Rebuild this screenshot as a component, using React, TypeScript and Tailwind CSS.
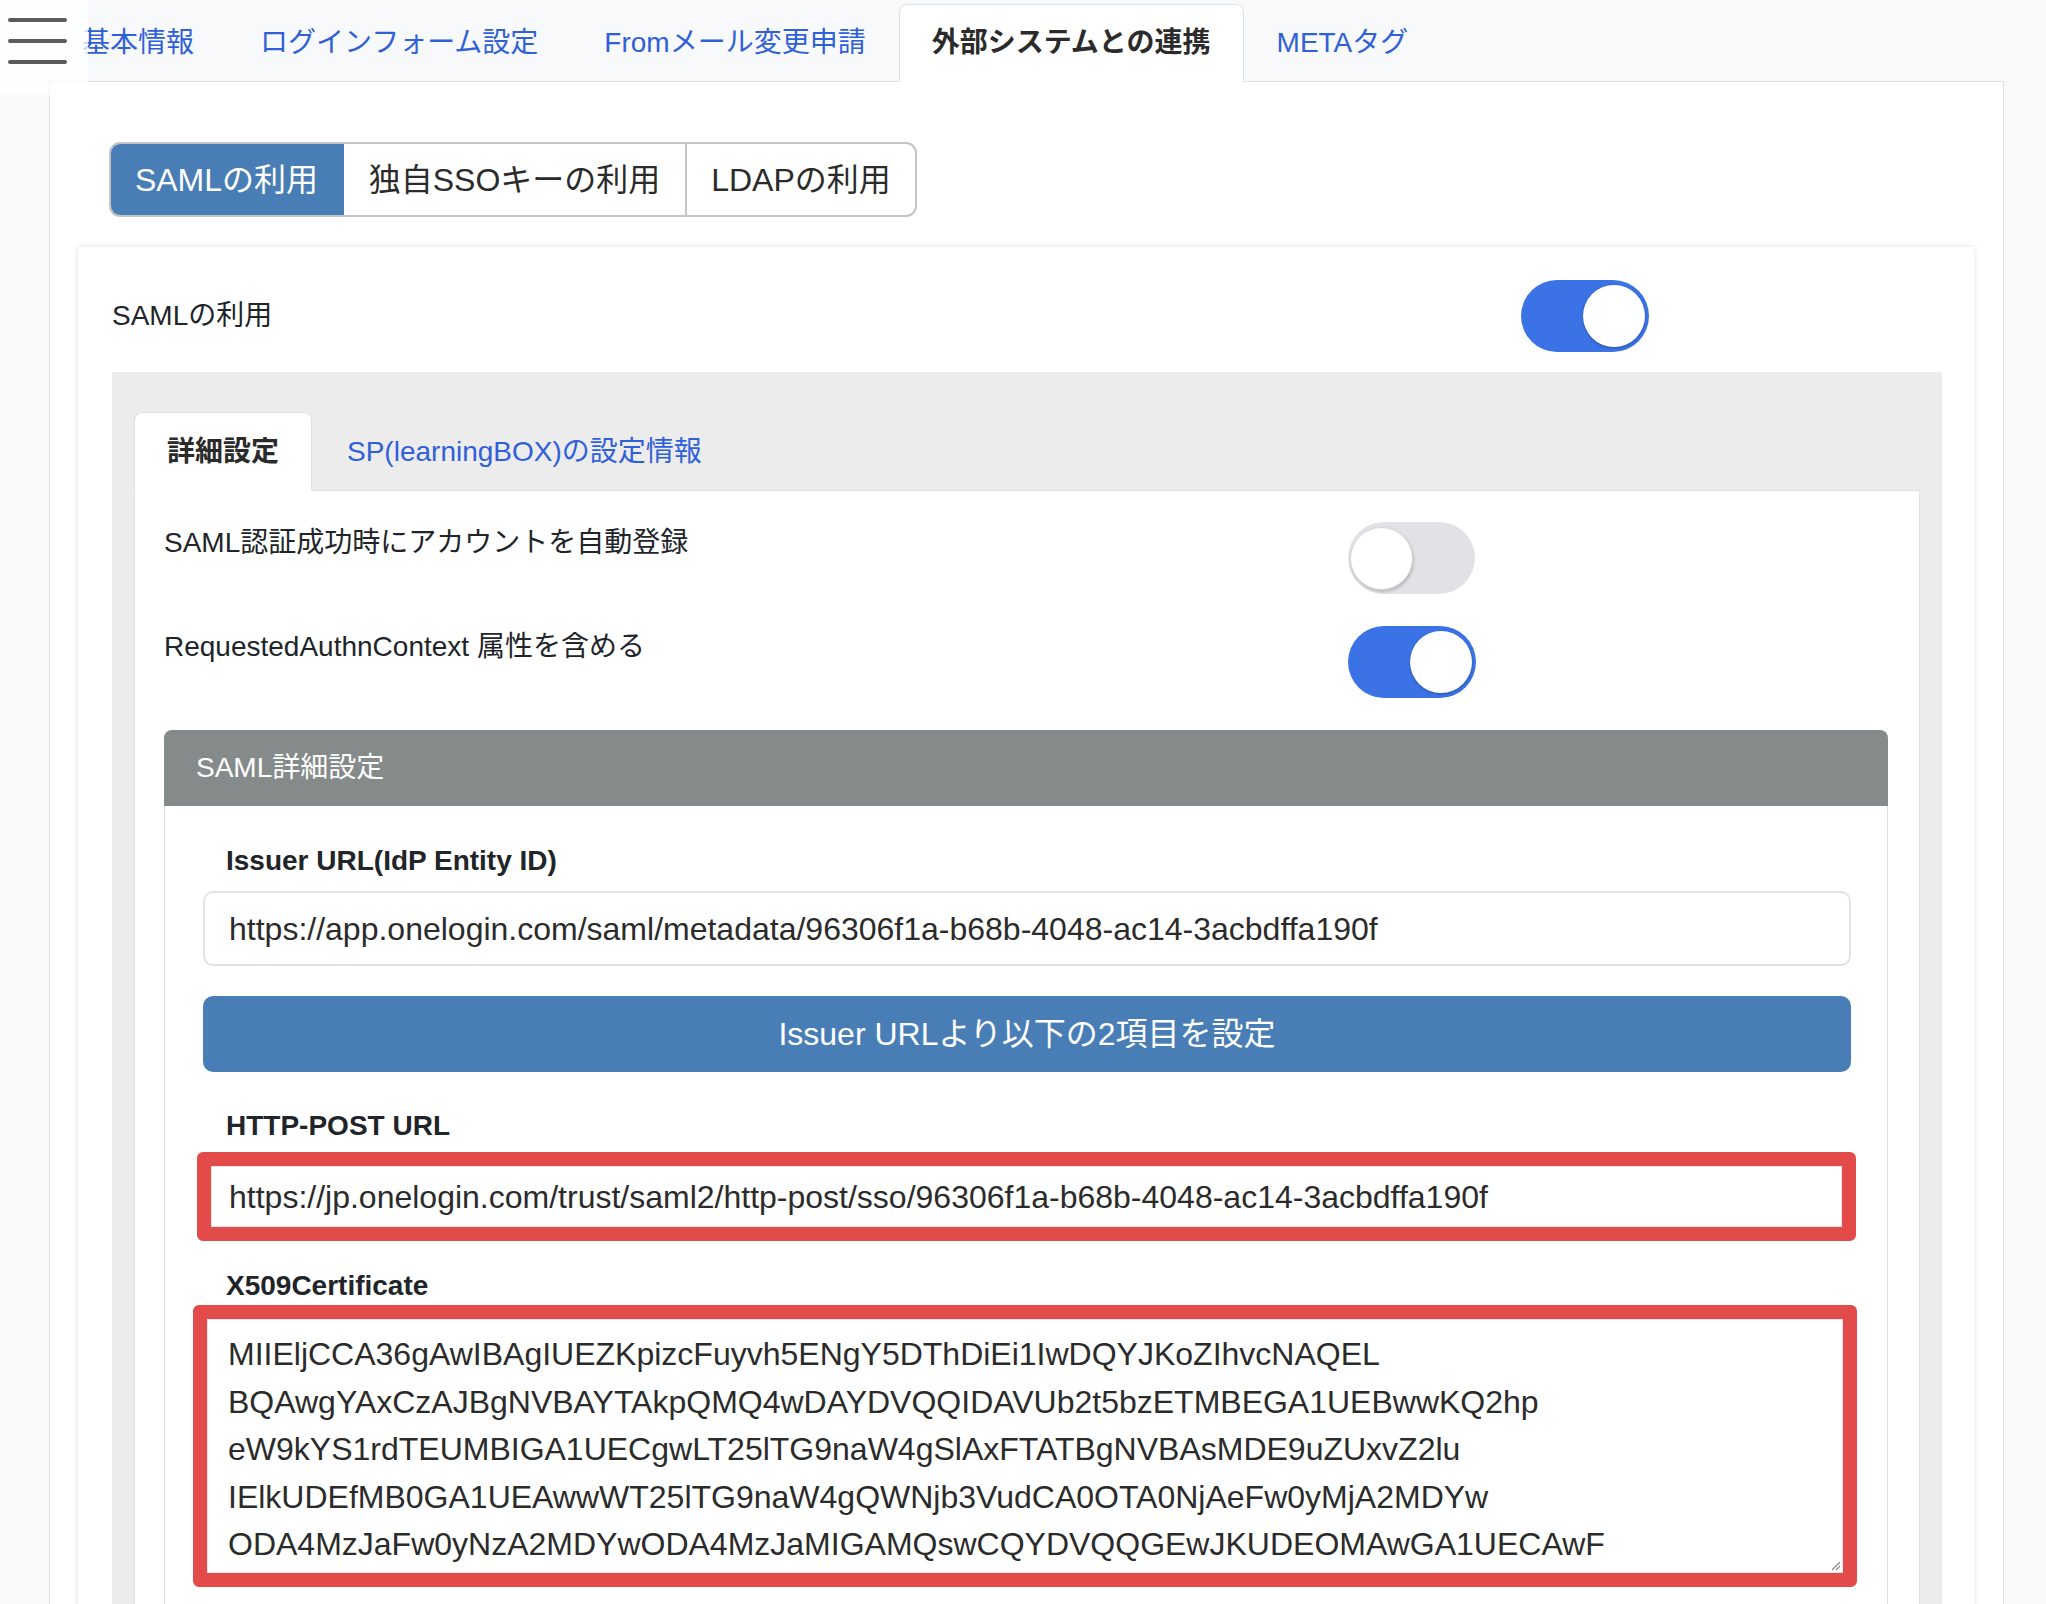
import React from 'react'

const mainTabs = ['基本情報', 'ログインフォーム設定', 'Fromメール変更申請', '外部システムとの連携', 'METAタグ']

const certLines = [
  'MIIEljCCA36gAwIBAgIUEZKpizcFuyvh5ENgY5DThDiEi1IwDQYJKoZIhvcNAQEL',
  'BQAwgYAxCzAJBgNVBAYTAkpQMQ4wDAYDVQQIDAVUb2t5bzETMBEGA1UEBwwKQ2hp',
  'eW9kYS1rdTEUMBIGA1UECgwLT25lTG9naW4gSlAxFTATBgNVBAsMDE9uZUxvZ2lu',
  'IElkUDEfMB0GA1UEAwwWT25lTG9naW4gQWNjb3VudCA0OTA0NjAeFw0yMjA2MDYw',
  'ODA4MzJaFw0yNzA2MDYwODA4MzJaMIGAMQswCQYDVQQGEwJKUDEOMAwGA1UECAwF'
]

function Toggle({ on }: { on: boolean }): React.JSX.Element {
  if (on) {
    return (
      <div className="flex h-[72px] w-[128px] shrink-0 items-center justify-end rounded-full bg-[#3b73e6] pr-[4px]">
        <div className="size-[62px] rounded-full bg-white shadow-[0_1px_3px_rgba(0,0,0,0.3)]" />
      </div>
    )
  }
  return (
    <div className="flex h-[72px] w-[127px] shrink-0 items-center justify-start rounded-full bg-[#e2e2e6] pl-[2px]">
      <div className="size-[63px] rounded-full border border-[#d6d6da] bg-white shadow-[1px_2px_3px_rgba(0,0,0,0.18)]" />
    </div>
  )
}

function FieldLabel({ children, className }: { children: React.ReactNode; className: string }): React.JSX.Element {
  return (
    <div className={`pl-[23px] text-[28px] leading-[40px] font-bold text-[#212529] ${className}`}>{children}</div>
  )
}

function SamlDetailPanel(): React.JSX.Element {
  return (
    <div className="mt-[32px] rounded-t-[8px]">
      <div className="flex h-[76px] items-center rounded-t-[8px] bg-[#858b8b] px-[32px] text-[28px] text-white">
        SAML詳細設定
      </div>
      <div className="h-[900px] border-x border-[#dcdcdc] bg-white pr-[36px] pl-[38px] pt-[35px]">
        <FieldLabel className="">Issuer URL(IdP Entity ID)</FieldLabel>
        <div className="mt-[10px] flex h-[75px] items-center rounded-[10px] border-2 border-[#e0e2e6] px-[24px] text-[32px] text-[#2b2b2b]">
          https://app.onelogin.com/saml/metadata/96306f1a-b68b-4048-ac14-3acbdffa190f
        </div>
        <button
          type="button"
          className="mt-[30px] flex h-[76px] w-full items-center justify-center rounded-[10px] bg-[#487eb5] text-[32px] text-white"
        >
          Issuer URLより以下の2項目を設定
        </button>

        <FieldLabel className="mt-[34px]">HTTP-POST URL</FieldLabel>
        <div className="mt-[6px] -mr-[5px] -ml-[6px] h-[89px] rounded-[6px] border-[14px] border-[#e34b4b]">
          <div className="flex h-full items-center border border-[#e6e6e6] pl-[17px] text-[32px] text-[#2b2b2b]">
            https://jp.onelogin.com/trust/saml2/http-post/sso/96306f1a-b68b-4048-ac14-3acbdffa190f
          </div>
        </div>

        <FieldLabel className="mt-[25px]">X509Certificate</FieldLabel>
        <div className="-mt-[1px] -mr-[6px] -ml-[10px] h-[282px] rounded-[6px] border-[14px] border-[#e34b4b]">
          <div className="relative h-full border border-[#e6e6e6] pt-[11px] pl-[20px] text-[32px] leading-[47.5px] text-[#2b2b2b]">
            {certLines.map((line) => (
              <div key={line}>{line}</div>
            ))}
            <svg className="absolute right-[1px] bottom-[1px]" width="12" height="12" viewBox="0 0 12 12">
              <path d="M11 3 L3 11 M11 7 L7 11" stroke="#8a8a8a" strokeWidth="1.2" />
            </svg>
          </div>
        </div>
      </div>
    </div>
  )
}

function DetailTabs(): React.JSX.Element {
  return (
    <div className="mt-[20px] bg-[#ececec] pt-[40px] pr-[22px] pl-[22px]">
      <div className="flex border-b border-[#dee2e6]">
        <div className="-mb-px flex h-[79px] items-center rounded-t-[8px] border border-[#dee2e6] border-b-white bg-white px-[32px] text-[28px] font-bold text-[#2b2b2b]">
          詳細設定
        </div>
        <div className="-mb-px flex h-[79px] items-center border border-transparent px-[34px] text-[28px] text-[#3060d8]">
          SP(learningBOX)の設定情報
        </div>
      </div>
      <div className="border-x border-[#dee2e6] bg-white pt-[31px] pr-[31px] pl-[29px]">
        <div className="flex items-start">
          <div className="w-[1184px] text-[28px] leading-[42px] text-[#212529]">SAML認証成功時にアカウントを自動登録</div>
          <Toggle on={false} />
        </div>
        <div className="mt-[32px] flex items-start">
          <div className="w-[1184px] text-[28px] leading-[42px] text-[#212529]">RequestedAuthnContext 属性を含める</div>
          <Toggle on />
        </div>
        <SamlDetailPanel />
      </div>
    </div>
  )
}

export default function App(): React.JSX.Element {
  return (
    <div className="relative h-[1604px] w-[2046px] overflow-hidden bg-[#f8f9fa] font-['Liberation_Sans','Noto_Sans_CJK_JP',sans-serif]">
      <div className="absolute top-0 left-0 z-10 flex h-[95px] w-[88px] flex-col gap-[17px] bg-white/75 pt-[18px] pl-[8px]">
        <div className="h-[4px] w-[59px] rounded-full bg-[#5c5c5c]" />
        <div className="h-[4px] w-[59px] rounded-full bg-[#5c5c5c]" />
        <div className="h-[4px] w-[59px] rounded-full bg-[#5c5c5c]" />
      </div>

      <div className="ml-[49px] w-[1955px]">
        <div className="flex h-[82px] items-end border-b border-[#dee2e6]">
          {mainTabs.map((tab, i) =>
            i === 3 ? (
              <div
                key={tab}
                className="-mb-px flex h-[78px] items-center rounded-t-[8px] border border-[#dee2e6] border-b-white bg-white px-[32px] text-[28px] font-bold text-[#2b2b2b]"
              >
                {tab}
              </div>
            ) : (
              <div
                key={tab}
                className="-mb-px flex h-[78px] items-center border border-transparent px-[32px] text-[28px] text-[#3060d8]"
              >
                {tab}
              </div>
            )
          )}
        </div>

        <div className="h-[1600px] border-x border-[#dee2e6] bg-white px-[28px] pt-[60px]">
          <div className="ml-[31px] flex h-[75px] w-fit overflow-hidden rounded-[11px] border-2 border-[#c4c4c4] text-[32px]">
            <div className="-my-[2px] -ml-[2px] flex w-[235px] items-center justify-center rounded-l-[11px] bg-[#487eb5] text-white">
              SAMLの利用
            </div>
            <div className="flex w-[343px] items-center justify-center border-r-2 border-[#c4c4c4] text-[#2b2b2b]">
              独自SSOキーの利用
            </div>
            <div className="flex w-[228px] items-center justify-center text-[#2b2b2b]">LDAPの利用</div>
          </div>

          <div className="mt-[30px] mr-[1px] h-[1400px] bg-white pt-[33px] pr-[32px] pl-[34px] shadow-[0_0_6px_rgba(0,0,0,0.12)]">
            <div className="flex items-center">
              <div className="w-[1409px] text-[28px] text-[#212529]">SAMLの利用</div>
              <Toggle on />
            </div>
            <DetailTabs />
          </div>
        </div>
      </div>
    </div>
  )
}
